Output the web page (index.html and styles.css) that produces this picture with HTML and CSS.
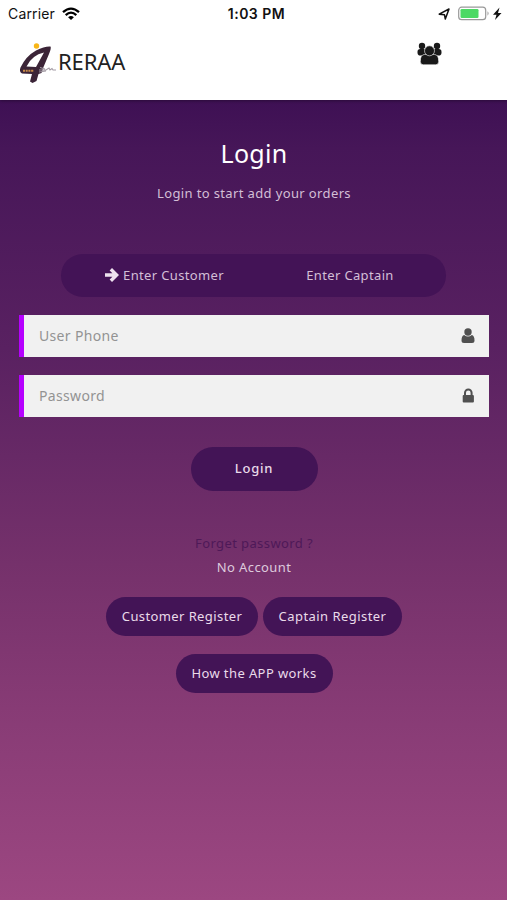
FILE: index.html
```html
<!DOCTYPE html>
<html lang="en">
<head>
<meta charset="utf-8">
<title>RERAA Login</title>
<link rel="stylesheet" href="styles.css">
</head>
<body>
<header class="header">
  <div class="status">
    <div class="carrier"><span>Carrier</span>
      <svg width="18" height="14" viewBox="0 0 18 14" fill="none" stroke="#000" stroke-width="2.3"><path d="M1 5.2Q9-2 17 5.2M3.700 8.100Q9 3.200 14.300 8.100"/><path d="M6.100 10.300Q9 7.800 11.900 10.300L9 13Z" fill="#000" stroke="none"/></svg>
    </div>
    <time class="time">1:03 PM</time>
    <div class="power">
      <svg width="64" height="16" viewBox="0 0 64 16"><path d="M1.200 8.200 11 3 7.300 13 6.500 8.800Z" fill="none" stroke="#111" stroke-width="1.500" stroke-linejoin="round"/><rect x="20.700" y="1.200" width="27" height="12.500" rx="3" fill="#fff" stroke="#999" stroke-width="1.200"/><rect x="22.500" y="3" width="18" height="9" rx="1.300" fill="#4cd964"/><path d="M49.500 5.300q2.200 2.200 0 4.400z" fill="#999"/><path d="M61.500 1.500 55 8.700h3.500L57 14 63.500 7H60z" fill="#111"/></svg>
    </div>
  </div>
  <div class="brandbar">
    <div class="brand">
      <svg class="logo" width="40" height="42" viewBox="0 0 40 42"><circle cx="18.500" cy="4" r="2.700" fill="#f8b617"/><path fill="#3b2437" fill-rule="evenodd" d="M32.500 4.500Q33.500 6 31 12L25.500 25 23.500 31 20.500 32 18.500 39 14.500 41 12 39.500 14 32 4 31.500Q.8 29.500 2.500 25.500 8 14 18 8.500 27 4 32.500 4.500ZM26 10.500Q14 13 8.500 24.500L18 25Z"/><path d="M5 28.800h11" stroke="#c98b49" stroke-width="2" stroke-dasharray="2 .7"/><path d="M22 25.500l5 1.500M21 28h7l3-2 1 2 2-1.500 1 1.500h3M21 30l7-1" fill="none" stroke="#a49ca5" stroke-width="1.100"/></svg>
      <span class="name">RERAA</span>
    </div>
    <svg class="users" width="25" height="24" viewBox="0 0 25 24" fill="#191919"><circle cx="5" cy="4" r="3.200"/><circle cx="20" cy="4" r="3.200"/><rect x=".5" y="7" width="9" height="6.600" rx="2.800"/><rect x="15.500" y="7" width="9" height="6.600" rx="2.800"/><path d="M3.300 19.500Q3.300 12.500 7.500 12.500h10q4.200 0 4.200 7 0 3.300-3 3.300H6.300q-3 0-3-3.300z" stroke="#fff" stroke-width=".6"/><circle cx="12.500" cy="8.800" r="5" stroke="#fff" stroke-width=".6"/></svg>
  </div>
</header>
<main class="main">
  <h1 class="title">Login</h1>
  <p class="subtitle">Login to start add your orders</p>
  <div class="tabs">
    <div class="tab customer"><svg width="14" height="14" viewBox="0 0 14 14" fill="none" stroke="#eee2ef" stroke-width="3.400"><path d="M0 7h11M5.800 1.200 11.600 7l-5.800 5.800"/></svg><span>Enter Customer</span></div>
    <div class="tab captain"><span>Enter Captain</span></div>
  </div>
  <form class="form">
    <label class="field"><span class="phone">User Phone</span><svg width="14" height="16" viewBox="0 0 14 16" fill="#505050"><circle cx="7" cy="4" r="3.700"/><path d="M3.200 7Q7 10 10.800 7 13.500 7.500 13.500 12.500 13.500 15 11 15H3Q.5 15 .5 12.500.5 7.500 3.200 7z"/></svg></label>
    <label class="field"><span class="password">Password</span><svg width="14" height="16" viewBox="0 0 14 16"><path d="M4 8V4.800a3.300 3.300 0 0 1 6.600 0V8" fill="none" stroke="#505050" stroke-width="2"/><rect x="1.700" y="7" width="11.200" height="7.500" rx="1" fill="#505050"/></svg></label>
    <button class="pill submit" type="button">Login</button>
  </form>
  <a class="forgot">Forget password ?</a>
  <p class="none">No Account</p>
  <div class="registers">
    <button class="pill customer-reg" type="button">Customer Register</button>
    <button class="pill captain-reg" type="button">Captain Register</button>
  </div>
  <button class="pill how" type="button">How the APP works</button>
</main>
</body>
</html>
```
FILE: styles.css
```css
* { box-sizing: border-box; }
body { margin: 0; height: 900px; display: flex; flex-direction: column; font: 14px/20px "Noto Sans", sans-serif; overflow: hidden; }
p, h1 { margin: 0; font-weight: 400; }
svg { display: block; flex: none; }
.header { height: 100px; background: #fff; flex: none; z-index: 1; box-shadow: 0 1px 3px #0005; }
.status { height: 28px; padding: 0 5px 0 8px; display: grid; grid-template-columns: 1fr auto 1fr; align-items: center; font-family: Inter, sans-serif; color: #111; }
.carrier { display: flex; align-items: center; gap: 7px; font-size: 14px; letter-spacing: .15px; }
.carrier svg { margin-top: -1px; }
.time { font-size: 14px; font-weight: 600; letter-spacing: .5px; margin-left: 3px; }
.power { justify-self: end; }
.brandbar { display: flex; justify-content: space-between; padding: 14px 65px 0 18px; }
.brand { display: flex; height: 42px; align-items: center; }
.name { font-size: 22px; letter-spacing: -.1px; color: #222; margin-left: 0; margin-top: -4px; }
.main { flex: 1; padding: 35px 18px 0 19px; display: flex; flex-direction: column; align-items: center; color: #d3bfd6; background: linear-gradient(#3e1054 0, #461658 6%, #592161 31%, #75316b 58%, #873b75 76%, #9c4781 100%); }
.title { font-size: 25px; line-height: 36px; color: #fff; letter-spacing: .3px; }
.subtitle { font-size: 13px; margin-top: 12px; letter-spacing: .37px; }
.tabs { width: 385px; height: 43px; margin: 51px 1px 0 0; border-radius: 22px; background: #431356; display: grid; grid-template-columns: 207px 1fr; align-items: center; font-size: 13px; letter-spacing: .35px; padding-bottom: 2px; }
.tab { display: flex; align-items: center; justify-content: center; gap: 4px; }
.captain { padding-right: 14px; }
.form { width: 100%; margin-top: 18px; display: flex; flex-direction: column; align-items: center; }
.field { width: 100%; height: 42px; margin-bottom: 18px; padding: 0 14px 0 15px; border-left: 5px solid #b600ff; background: #f1f1f1; color: #939393; letter-spacing: .33px; display: flex; align-items: center; justify-content: space-between; }
.pill { border: 0; border-radius: 24px; background: #431456; color: #eadbea; font: 13px/20px "Noto Sans", sans-serif; letter-spacing: .4px; padding: 0 0 2px; height: 39px; white-space: nowrap; }
.submit { width: 127px; height: 44px; margin-top: 12px; font-weight: 500; letter-spacing: .8px; }
.forgot { margin-top: 42px; font-size: 13px; color: #4e1958; letter-spacing: .4px; }
.none { margin-top: 4px; font-size: 13px; color: #ddcadd; letter-spacing: .4px; }
.registers { display: flex; gap: 5px; margin-top: 20px; }
.customer-reg { width: 152px; }
.captain-reg { width: 139px; letter-spacing: .45px; }
.how { width: 157px; margin-top: 18px; }
```
